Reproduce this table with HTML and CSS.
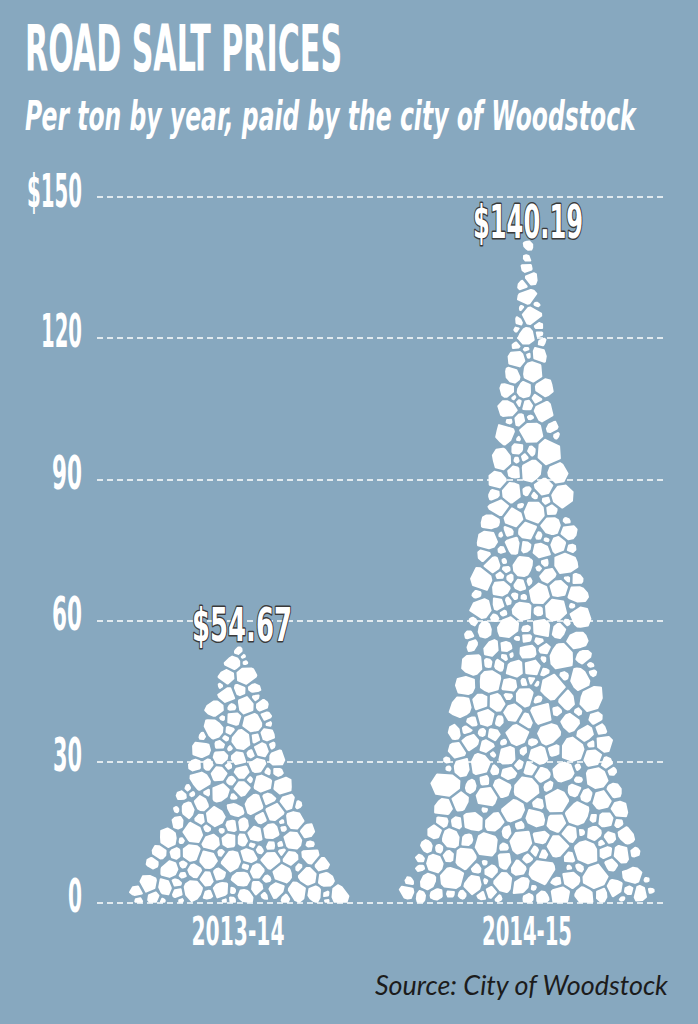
FILE: index.html
```html
<!DOCTYPE html>
<html lang="en">
<head>
<meta charset="utf-8">
<title>Road Salt Prices</title>
<link rel="stylesheet" href="styles.css">
</head>
<body>
<main class="graphic">
  <header class="head">
    <h1 class="title"><span class="fit" data-w="317">ROAD SALT PRICES</span></h1>
    <p class="subtitle"><span class="fit" data-w="611">Per ton by year, paid by the city of Woodstock</span></p>
  </header>
  <svg class="chart" width="698" height="800" viewBox="0 160 698 800" xmlns="http://www.w3.org/2000/svg">
    <g class="grid">
      <line x1="97" y1="197" x2="665" y2="197"/>
      <line x1="97" y1="338" x2="665" y2="338"/>
      <line x1="97" y1="480" x2="665" y2="480"/>
      <line x1="97" y1="621" x2="665" y2="621"/>
      <line x1="97" y1="762" x2="665" y2="762"/>
      <line x1="97" y1="903" x2="665" y2="903"/>
    </g>
    <g class="axis">
      <text x="82" y="207" textLength="55" lengthAdjust="spacingAndGlyphs">$150</text>
      <text x="82" y="347" textLength="41" lengthAdjust="spacingAndGlyphs">120</text>
      <text x="82" y="489" textLength="30" lengthAdjust="spacingAndGlyphs">90</text>
      <text x="82" y="630" textLength="30" lengthAdjust="spacingAndGlyphs">60</text>
      <text x="82" y="771" textLength="29" lengthAdjust="spacingAndGlyphs">30</text>
      <text x="82" y="912" textLength="14" lengthAdjust="spacingAndGlyphs">0</text>
    </g>
    <g id="pile-a" class="pile"></g>
    <g id="pile-b" class="pile"></g>
    <g class="value">
      <text x="242" y="641" textLength="100" lengthAdjust="spacingAndGlyphs">$54.67</text>
      <text x="528" y="238" textLength="110" lengthAdjust="spacingAndGlyphs">$140.19</text>
    </g>
    <g class="year">
      <text x="238" y="945" textLength="93" lengthAdjust="spacingAndGlyphs">2013-14</text>
      <text x="527" y="945" textLength="90" lengthAdjust="spacingAndGlyphs">2014-15</text>
    </g>
  </svg>
  <p class="source"><span class="fit fit-end" data-w="293">Source: City of Woodstock</span></p>
</main>
<script src="script.js"></script>
</body>
</html>
```

FILE: styles.css
```css
html, body {
  margin: 0;
  padding: 0;
}

body {
  background: #87a8bf;
  width: 698px;
  height: 1024px;
  overflow: hidden;
}

.graphic {
  width: 698px;
  height: 1024px;
}

.head {
  height: 160px;
  box-sizing: border-box;
  padding: 17px 0 0 25px;
}

.title {
  margin: 0;
  font-family: "DejaVu Sans Condensed", "DejaVu Sans", sans-serif;
  font-weight: 700;
  font-size: 64.5px;
  line-height: 1;
  color: #ffffff;
  white-space: nowrap;
}

.subtitle {
  margin: 14px 0 0;
  font-family: "DejaVu Sans Condensed", "DejaVu Sans", sans-serif;
  font-weight: 700;
  font-style: italic;
  font-size: 41px;
  line-height: 1;
  color: #ffffff;
  white-space: nowrap;
}

.fit {
  display: inline-block;
  white-space: nowrap;
  transform-origin: 0 0;
}

.fit-end {
  transform-origin: 100% 0;
}

.chart {
  display: block;
}

.grid line {
  stroke: #ffffff;
  stroke-width: 1.6;
  stroke-dasharray: 6 4;
}

.axis text,
.value text,
.year text {
  font-family: "DejaVu Sans Condensed", "DejaVu Sans", sans-serif;
  font-weight: 700;
  fill: #ffffff;
}

.axis text {
  font-size: 46px;
  text-anchor: end;
}

.value text {
  font-size: 47px;
  text-anchor: middle;
  stroke: #3a3a3a;
  stroke-width: 3px;
  stroke-linejoin: round;
  paint-order: stroke;
}

.year text {
  font-size: 38.5px;
  text-anchor: middle;
}

.pile polygon {
  fill: #ffffff;
  stroke: #ffffff;
  stroke-width: 2;
  stroke-linejoin: round;
}

.source {
  margin: 11px 0 0;
  padding-right: 30px;
  text-align: right;
  font-family: Lato, "Open Sans", sans-serif;
  font-style: italic;
  font-weight: 400;
  font-size: 27px;
  line-height: 1;
  color: #1c1c1c;
  white-space: nowrap;
}
```

FILE: script.js
```js
(function () {
  document.querySelectorAll('.fit').forEach(function (el) {
    var w = parseFloat(el.dataset.w);
    var n = el.offsetWidth;
    if (n > 0) {
      var extra = (w - n).toFixed(2) + 'px';
      if (el.classList.contains('fit-end')) el.style.marginLeft = extra;
      else el.style.marginRight = extra;
      el.style.transform = 'scaleX(' + (w / n).toFixed(4) + ')';
    }
  });

  function mulberry32(a) {
    return function () {
      a |= 0; a = a + 0x6D2B79F5 | 0;
      var t = Math.imul(a ^ a >>> 15, 1 | a);
      t = t + Math.imul(t ^ t >>> 7, 61 | t) ^ t;
      return ((t ^ t >>> 14) >>> 0) / 4294967296;
    };
  }

  var NS = 'http://www.w3.org/2000/svg';

  function clip(poly, nx, ny, c) {
    var out = [];
    var n = poly.length;
    for (var i = 0; i < n; i++) {
      var A = poly[i], B = poly[(i + 1) % n];
      var da = A[0] * nx + A[1] * ny - c;
      var db = B[0] * nx + B[1] * ny - c;
      if (da <= 0) out.push(A);
      if ((da <= 0) !== (db <= 0)) {
        var t = da / (da - db);
        out.push([A[0] + t * (B[0] - A[0]), A[1] + t * (B[1] - A[1])]);
      }
    }
    return out;
  }

  function area(poly) {
    var s = 0;
    for (var i = 0; i < poly.length; i++) {
      var A = poly[i], B = poly[(i + 1) % poly.length];
      s += A[0] * B[1] - B[0] * A[1];
    }
    return Math.abs(s) / 2;
  }

  function pile(g, o) {
    var rand = mulberry32(o.seed);
    var H = o.base - o.apex;
    var stones = [];
    var cell = 26;
    var grid = {};
    function key(i, j) { return i + ',' + j; }
    function near(x, y, span, fn) {
      var ci = Math.floor(x / cell), cj = Math.floor(y / cell);
      for (var i = ci - span; i <= ci + span; i++) {
        for (var j = cj - span; j <= cj + span; j++) {
          var b = grid[key(i, j)];
          if (!b) continue;
          for (var k = 0; k < b.length; k++) {
            if (fn(b[k]) === false) return false;
          }
        }
      }
      return true;
    }
    function fits(x, y, r) {
      return near(x, y, 1, function (s) {
        var dx = s.x - x, dy = s.y - y;
        var m = s.r + r + o.gap;
        if (dx * dx + dy * dy < m * m) return false;
      });
    }
    function add(x, y, r) {
      var s = { x: x, y: y, r: r };
      stones.push(s);
      var k = key(Math.floor(x / cell), Math.floor(y / cell));
      (grid[k] || (grid[k] = [])).push(s);
    }
    add(o.cx, o.apex + 3.5, 3.5);
    o.phases.forEach(function (p) {
      for (var n = 0; n < p.tries; n++) {
        var y = o.apex + rand() * H;
        var t = (y - o.apex) / H;
        var hw = Math.max(1.5, o.hw(t));
        var r = p.rmin + rand() * (p.rmax - p.rmin);
        r = Math.min(r, Math.max(1.8, hw * 0.7 + 1.2));
        var x = o.cx + (rand() * 2 - 1) * hw;
        if (Math.abs(x - o.cx) + r * 0.6 > hw + 1) continue;
        if (y + r > o.base + 0.5) continue;
        if (y - r < o.apex - 1) continue;
        if (fits(x, y, r)) add(x, y, r);
      }
    });

    var G = o.cellGap;
    stones.forEach(function (a) {
      var nv = 7 + Math.floor(rand() * 4);
      var a0 = rand() * Math.PI * 2;
      var rot = rand() * Math.PI;
      var ey = 0.62 + 0.38 * rand();
      var cr = Math.cos(rot), sr = Math.sin(rot);
      var R = a.r * o.grow;
      var poly = [];
      for (var i = 0; i < nv; i++) {
        var ang = a0 + i * 2 * Math.PI / nv + (rand() - 0.5) * 0.6 * (2 * Math.PI / nv);
        var d = R * (0.8 + 0.25 * rand());
        var lx = Math.cos(ang) * d, ly = Math.sin(ang) * d * ey;
        poly.push([a.x + lx * cr - ly * sr, a.y + lx * sr + ly * cr]);
      }
      near(a.x, a.y, 2, function (b) {
        if (b === a || poly.length < 3) return;
        var dx = b.x - a.x, dy = b.y - a.y;
        var d = Math.sqrt(dx * dx + dy * dy);
        if (d < 0.01) return;
        var nx = dx / d, ny = dy / d;
        var cb = (d * d + a.r * a.r - b.r * b.r) / (2 * d) - G / 2;
        var c = a.x * nx + a.y * ny + cb;
        poly = clip(poly, nx, ny, c);
      });
      poly = clip(poly, 0, 1, o.base - 1.2);
      if (poly.length < 3 || area(poly) < 3) return;
      var el = document.createElementNS(NS, 'polygon');
      el.setAttribute('points', poly.map(function (p) {
        return p[0].toFixed(1) + ',' + p[1].toFixed(1);
      }).join(' '));
      g.appendChild(el);
    });
  }

  pile(document.getElementById('pile-a'), {
    seed: 1317,
    cx: 238, apex: 648, base: 903, gap: 1.5, cellGap: 4.5, grow: 1.45,
    hw: function (t) { return 112 * (0.75 * Math.pow(t, 0.8) + 0.25 * Math.pow(t, 4)); },
    phases: [
      { rmin: 6, rmax: 9.5, tries: 2500 },
      { rmin: 3.8, rmax: 6, tries: 3500 },
      { rmin: 2.4, rmax: 3.8, tries: 3000 },
      { rmin: 1.6, rmax: 2.4, tries: 800 }
    ]
  });

  pile(document.getElementById('pile-b'), {
    seed: 2015,
    cx: 528, apex: 242, base: 903, gap: 1.5, cellGap: 4.5, grow: 1.45,
    hw: function (t) { return 100 * t + 30 * Math.pow(t, 8); },
    phases: [
      { rmin: 7, rmax: 11.5, tries: 3000 },
      { rmin: 4.5, rmax: 7, tries: 5000 },
      { rmin: 2.6, rmax: 4.5, tries: 4000 },
      { rmin: 1.6, rmax: 2.6, tries: 1000 }
    ]
  });
})();
```
